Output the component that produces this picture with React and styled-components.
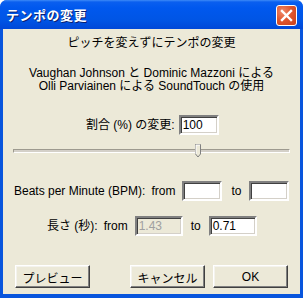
import React from "react";
import styled, { createGlobalStyle } from "styled-components";

const Global = createGlobalStyle`
  html, body { margin: 0; padding: 0; background: #ffffff; }
  body { font-family: "Liberation Sans", "Noto Sans CJK JP", sans-serif; font-size: 12px; color: #000; }
`;

const Window = styled.div`
  width: 303px;
  height: 298px;
  display: flex;
  flex-direction: column;
  box-sizing: border-box;
  border-radius: 7px 7px 0 0;
  overflow: hidden;
  background: #0855dd;
`;

const TitleBar = styled.div`
  height: 29px;
  flex: none;
  display: flex;
  align-items: center;
  justify-content: space-between;
  padding: 0 6px 0 6px;
  box-sizing: border-box;
  background: linear-gradient(#3d8af7 0px, #0a5fef 2px, #0058ee 8px, #0055e5 20px, #0048d8 29px);
`;

const Title = styled.div`
  color: #fff;
  font-weight: bold;
  font-size: 13px;
  font-family: "Noto Sans CJK JP", sans-serif;
  letter-spacing: 0.5px;
  text-shadow: 1px 1px 0 #0a1e6e;
`;

const CloseBtn = styled.div`
  width: 21px;
  height: 21px;
  box-sizing: border-box;
  border: 1px solid #fff;
  border-radius: 3px;
  background: radial-gradient(circle at 30% 30%, #f08a6a 0, #e0572f 45%, #c8401a 100%);
  display: flex;
  align-items: center;
  justify-content: center;
  margin-top: 1px;
`;

const Client = styled.div`
  flex: 1;
  margin: 0 3px 4px 3px;
  background: #ece9d8;
  display: flex;
  flex-direction: column;
  align-items: stretch;
`;

const Center = styled.div`
  text-align: center;
  line-height: 13px;
  margin-top: ${(p) => p.$mt || 0}px;
`;

const Row = styled.div`
  display: flex;
  align-items: center;
  margin-top: ${(p) => p.$mt || 0}px;
  padding-left: ${(p) => p.$pl || 0}px;
  height: 20px;
`;

const Label = styled.span`
  margin-right: ${(p) => p.$mr || 0}px;
  white-space: nowrap;
  line-height: 13px;
`;

const Input = styled.div`
  width: ${(p) => p.$w}px;
  height: 20px;
  box-sizing: border-box;
  border-style: solid;
  border-width: 2px;
  border-color: #808080 #ffffff #ffffff #808080;
  box-shadow: inset 1px 1px 0 #404040, inset -1px -1px 0 #d4d0c8;
  background: ${(p) => (p.$disabled ? "#ece9d8" : "#fff")};
  color: ${(p) => (p.$disabled ? "#a0a0a0" : "#000")};
  padding: 1px 0 0 2px;
  line-height: 14px;
  margin-right: ${(p) => p.$mr || 0}px;
  flex: none;
`;

const SliderWrap = styled.div`
  position: relative;
  height: 15px;
  margin: 9px 10px 0 10px;
`;

const Track = styled.div`
  position: absolute;
  left: 0;
  right: 0;
  top: 5px;
  height: 4px;
  box-sizing: border-box;
  border-style: solid;
  border-width: 1px;
  border-color: #9d9a8f #ffffff #ffffff #9d9a8f;
  background: #d4d0c8;
`;

const ButtonRow = styled.div`
  display: flex;
  margin-top: 29px;
  padding-left: 12px;
`;

const Button = styled.div`
  width: 75px;
  height: 23px;
  box-sizing: border-box;
  border-style: solid;
  border-width: 1px;
  border-color: #ffffff #404040 #404040 #ffffff;
  box-shadow: inset -1px -1px 0 #808080, inset 1px 1px 0 #f4f3ee;
  background: #ece9d8;
  display: flex;
  align-items: center;
  justify-content: center;
  margin-left: ${(p) => p.$ml || 0}px;
  padding-top: 1px;
`;

export default function App() {
  return (
    <>
      <Global />
      <Window>
        <TitleBar>
          <Title>テンポの変更</Title>
          <CloseBtn>
            <svg width="13" height="13" viewBox="0 0 13 13">
              <path d="M2 2 L11 11 M11 2 L2 11" stroke="#fff" strokeWidth="2.4" strokeLinecap="square" />
            </svg>
          </CloseBtn>
        </TitleBar>
        <Client>
          <Center $mt={8}>ピッチを変えずにテンポの変更</Center>
          <Center $mt={17}>Vaughan Johnson と Dominic Mazzoni による</Center>
          <Center>Olli Parviainen による SoundTouch の使用</Center>
          <Row $mt={22} $pl={83}>
            <Label $mr={4}>割合 (%) の変更:</Label>
            <Input $w={40}>100</Input>
          </Row>
          <SliderWrap>
            <Track />
            <svg
              width="6"
              height="14"
              viewBox="0 0 6 14"
              style={{ position: "absolute", left: 182, top: 0 }}
            >
              <path d="M0.5 0.5 H5.5 V10 L3 13 L0.5 10 Z" fill="#ece9d8" stroke="#808080" />
              <path d="M1 1 H5 M1 1 V10" stroke="#fff" />
            </svg>
          </SliderWrap>
          <Row $mt={22} $pl={11}>
            <Label $mr={6}>Beats per Minute (BPM):</Label>
            <Label $mr={7}>from</Label>
            <Input $w={40} $mr={9} />
            <Label $mr={8}>to</Label>
            <Input $w={40} />
          </Row>
          <Row $mt={15} $pl={44}>
            <Label $mr={6}>長さ (秒):</Label>
            <Label $mr={7}>from</Label>
            <Input $w={48} $disabled $mr={8}>1.43</Input>
            <Label $mr={8}>to</Label>
            <Input $w={48}>0.71</Input>
          </Row>
          <ButtonRow>
            <Button>プレビュー</Button>
            <Button $ml={40}>キャンセル</Button>
            <Button $ml={8}>OK</Button>
          </ButtonRow>
        </Client>
      </Window>
    </>
  );
}
